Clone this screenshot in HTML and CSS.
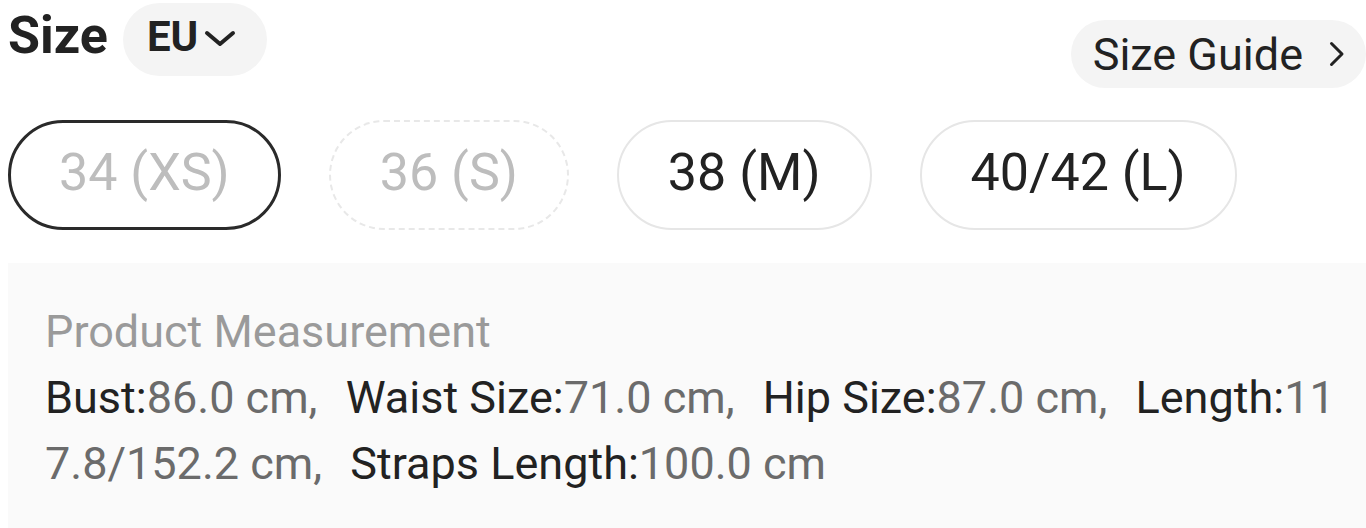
FILE: index.html
```html
<!DOCTYPE html>
<html lang="en">
<head>
<meta charset="utf-8">
<title>Size</title>
<link rel="stylesheet" href="styles.css">
</head>
<body>
<div class="page">
  <div class="header">
    <div class="title-group">
      <span class="title">Size</span>
      <span class="unit">EU<svg class="chev-down" width="32" height="18" viewBox="0 0 32 18"><path d="M3 3 L16 14 L29 3" fill="none" stroke="#222" stroke-width="4" stroke-linecap="round" stroke-linejoin="round"/></svg></span>
    </div>
    <a class="guide">Size Guide<svg class="chev-right" width="16" height="26" viewBox="0 0 16 26"><path d="M2.5 2.5 L13 13 L2.5 23.5" fill="none" stroke="#222" stroke-width="3" stroke-linecap="round" stroke-linejoin="round"/></svg></a>
  </div>

  <div class="sizes">
    <span class="size selected soldout">34 (XS)</span>
    <span class="size dashed soldout">36 (S)</span>
    <span class="size">38 (M)</span>
    <span class="size">40/42 (L)</span>
  </div>

  <div class="measure">
    <div class="measure-title">Product Measurement</div>
    <div class="measure-list"><span class="item"><span class="k">Bust:</span><span class="v">86.0 cm, </span></span><span class="item"><span class="k">Waist Size:</span><span class="v">71.0 cm, </span></span><span class="item"><span class="k">Hip Size:</span><span class="v">87.0 cm, </span></span><span class="item"><span class="k">Length:</span><span class="v">117.8/152.2 cm, </span></span><span class="item"><span class="k">Straps Length:</span><span class="v">100.0 cm</span></span></div>
  </div>
</div>
</body>
</html>
```

FILE: styles.css
```css
* { box-sizing: border-box; }
html, body { margin: 0; padding: 0; background: #fff; }
body {
  font-family: Roboto, "Noto Sans", "Liberation Sans", sans-serif;
  color: #222;
}
.page {
  padding: 3px 0 0 8px;
  width: 1366px;
  height: 528px;
  overflow: hidden;
}
.header {
  display: flex;
  justify-content: space-between;
  align-items: flex-start;
}
.title-group {
  display: flex;
  align-items: center;
  gap: 15px;
}
.title {
  font-size: 52px;
  font-weight: 700;
  line-height: 52px;
  padding-bottom: 8px;
  color: #222;
}
.unit {
  display: flex;
  align-items: center;
  gap: 6px;
  height: 73px;
  padding: 0 31px 6px 24px;
  border-radius: 37px;
  background: #f4f4f4;
  font-size: 42px;
  font-weight: 700;
  color: #222;
}
.chev-down { margin-top: 4px; }
.guide {
  display: flex;
  align-items: center;
  gap: 26px;
  height: 68px;
  margin-top: 17px;
  padding: 0 21px 0 22px;
  border-radius: 34px;
  background: #f4f4f4;
  font-size: 45px;
  color: #222;
}
.sizes {
  display: flex;
  gap: 48px;
  margin-top: 32px;
}
.size {
  display: block;
  height: 110px;
  padding: 0 49px 4px;
  border: 2px solid #e6e6e6;
  border-radius: 55px;
  font-size: 52px;
  line-height: 102px;
  color: #222;
  white-space: nowrap;
}
.size.soldout { color: #bdbdbd; }
.size.selected {
  border: 3px solid #2a2a2a;
  padding: 0 48px 4px;
  line-height: 100px;
}
.size.dashed { border: 2px dashed #e8e8e8; }
.measure {
  margin-top: 33px;
  height: 265px;
  padding: 36px 20px 0 37px;
  background: #fafafa;
}
.measure-title {
  font-size: 45px;
  line-height: 66px;
  color: #9a9a9a;
}
.measure-list {
  font-size: 45px;
  line-height: 66px;
  word-break: break-all;
}
.item { margin-right: 17px; }
.k { color: #222; }
.v { color: #6b6b6b; }
```
